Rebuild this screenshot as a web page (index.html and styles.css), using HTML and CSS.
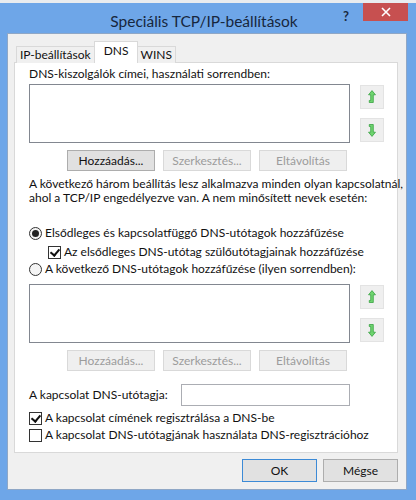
FILE: index.html
```html
<!DOCTYPE html>
<html lang="hu">
<head>
<meta charset="utf-8">
<title>Speciális TCP/IP-beállítások</title>
<link rel="stylesheet" href="styles.css">
</head>
<body>
<div class="strip"></div>
<div class="window">
  <div class="titlebar">
    <div class="title">Speciális TCP/IP-beállítások</div>
    <div class="help">?</div>
    <div class="close">
      <svg width="10" height="10" viewBox="0 0 10 10"><path d="M1 1 L9 9 M9 1 L1 9" stroke="#fff" stroke-width="1.6"/></svg>
    </div>
  </div>
  <div class="client">
    <div class="tabs">
      <div class="tab">IP-beállítások</div>
      <div class="tab active">DNS</div>
      <div class="tab">WINS</div>
    </div>
    <div class="panel">
      <div class="label first">DNS-kiszolgálók címei, használati sorrendben:</div>
      <div class="listrow">
        <div class="list"></div>
        <div class="arrows">
          <div class="arrowbtn">
            <svg width="24" height="24" viewBox="0 0 24 24"><path d="M12 5 L15.8 9.6 L13.4 9.6 L13.4 18 L9 18 L9 15.8 L10.6 15.8 L10.6 9.6 L8.2 9.6 Z" fill="#6fd46f" stroke="#2f9e3a" stroke-width="0.8" stroke-linejoin="round"/></svg>
          </div>
          <div class="arrowbtn">
            <svg width="24" height="24" viewBox="0 0 24 24"><path d="M9 6 L13.4 6 L13.4 14.4 L15.8 14.4 L12 19 L8.2 14.4 L10.6 14.4 L10.6 8.2 L9 8.2 Z" fill="#6fd46f" stroke="#2f9e3a" stroke-width="0.8" stroke-linejoin="round"/></svg>
          </div>
        </div>
      </div>
      <div class="btnrow">
        <div class="btn">Hozzáadás...</div>
        <div class="btn disabled">Szerkesztés...</div>
        <div class="btn disabled">Eltávolítás</div>
      </div>
      <p class="para">A következő három beállítás lesz alkalmazva minden olyan kapcsolatnál,<br>ahol a TCP/IP engedélyezve van. A nem minősített nevek esetén:</p>
      <div class="opt radio-row r1"><span class="radio checked"></span><span>Elsődleges és kapcsolatfüggő DNS-utótagok hozzáfűzése</span></div>
      <div class="opt check-row indent"><span class="check checked"></span><span>Az elsődleges DNS-utótag szülőutótagjainak hozzáfűzése</span></div>
      <div class="opt radio-row r2"><span class="radio"></span><span>A következő DNS-utótagok hozzáfűzése (ilyen sorrendben):</span></div>
      <div class="listrow second">
        <div class="list"></div>
        <div class="arrows">
          <div class="arrowbtn">
            <svg width="24" height="24" viewBox="0 0 24 24"><path d="M12 5 L15.8 9.6 L13.4 9.6 L13.4 18 L9 18 L9 15.8 L10.6 15.8 L10.6 9.6 L8.2 9.6 Z" fill="#6fd46f" stroke="#2f9e3a" stroke-width="0.8" stroke-linejoin="round"/></svg>
          </div>
          <div class="arrowbtn">
            <svg width="24" height="24" viewBox="0 0 24 24"><path d="M9 6 L13.4 6 L13.4 14.4 L15.8 14.4 L12 19 L8.2 14.4 L10.6 14.4 L10.6 8.2 L9 8.2 Z" fill="#6fd46f" stroke="#2f9e3a" stroke-width="0.8" stroke-linejoin="round"/></svg>
          </div>
        </div>
      </div>
      <div class="btnrow">
        <div class="btn disabled">Hozzáadás...</div>
        <div class="btn disabled">Szerkesztés...</div>
        <div class="btn disabled">Eltávolítás</div>
      </div>
      <div class="suffixrow">
        <span class="suffixlabel">A kapcsolat DNS-utótagja:</span>
        <div class="input"></div>
      </div>
      <div class="opt check-row c1"><span class="check checked"></span><span>A kapcsolat címének regisztrálása a DNS-be</span></div>
      <div class="opt check-row c2"><span class="check"></span><span>A kapcsolat DNS-utótagjának használata DNS-regisztrációhoz</span></div>
    </div>
    <div class="footer">
      <div class="btn wide default">OK</div>
      <div class="btn wide">Mégse</div>
    </div>
  </div>
</div>
</body>
</html>
```

FILE: styles.css
```css
html, body {
  margin: 0;
  padding: 0;
}
body {
  width: 416px;
  height: 500px;
  overflow: hidden;
  background: #e9ecef;
  font-family: Lato, "Noto Sans", sans-serif;
  font-size: 12px;
  color: #111;
}
.strip {
  height: 3px;
  background: #e9ecef;
}
.window {
  height: 497px;
  background: #6ea6e8;
  display: flex;
  flex-direction: column;
  box-sizing: border-box;
  padding: 0 9px 10px 7px;
}
.titlebar {
  height: 30px;
  display: flex;
  align-items: flex-start;
  position: relative;
  margin-right: -1px;
}
.title {
  flex: 1;
  text-align: center;
  font-size: 15.5px;
  color: #17273d;
  line-height: 18px;
  padding-top: 9px;
  padding-left: 62px;
}
.help {
  width: 14px;
  font-weight: bold;
  font-size: 13px;
  color: #1a2a40;
  padding-top: 5px;
  margin-right: 10px;
  text-align: center;
}
.close {
  width: 45px;
  height: 18px;
  background: #c75050;
  display: flex;
  align-items: center;
  justify-content: center;
}
.client {
  flex: 1;
  background: #f0f0f0;
  border: 1px solid #8fa7c6;
  padding: 8px 8px 0 6px;
  display: flex;
  flex-direction: column;
}
.tabs {
  display: flex;
  align-items: flex-end;
  padding-left: 2px;
  height: 21px;
  position: relative;
  z-index: 1;
  margin-bottom: -1px;
}
.tab {
  flex: none;
  height: 17px;
  box-sizing: border-box;
  border: 1px solid #d9d9d9;
  border-bottom: none;
  background: #f0f0f0;
  line-height: 16px;
  padding: 0 3px;
  white-space: nowrap;
  margin-left: -1px;
}
.tab:first-child {
  margin-left: 0;
}
.tab.active {
  height: 22px;
  background: #fff;
  line-height: 18px;
  padding: 0 8px 0 9px;
  position: relative;
  z-index: 2;
}
.panel {
  height: 391px;
  box-sizing: border-box;
  background: #fff;
  border: 1px solid #d9d9d9;
  padding: 4px 0 0 14px;
  display: flex;
  flex-direction: column;
}
.label, .para, .opt, .suffixlabel {
  line-height: 14px;
  white-space: nowrap;
}
.listrow {
  display: flex;
  margin-top: 3px;
}
.listrow.second {
  margin-top: 7px;
}
.list {
  width: 321px;
  height: 59px;
  box-sizing: border-box;
  border: 1px solid #828790;
  background: #fff;
}
.arrows {
  margin-left: 10px;
  padding-top: 1px;
  display: flex;
  flex-direction: column;
  gap: 9px;
}
.arrowbtn {
  width: 24px;
  height: 24px;
  box-sizing: border-box;
  border: 1px solid #e3e3e3;
  background: #efefef;
  display: flex;
  align-items: center;
  justify-content: center;
}
.arrowbtn svg {
  display: block;
}
.btnrow {
  display: flex;
  justify-content: flex-end;
  gap: 8px;
  width: 318px;
  margin-top: 7px;
}
.btn {
  width: 88px;
  height: 21px;
  box-sizing: border-box;
  border: 1px solid #adadad;
  background: #e1e1e1;
  display: flex;
  align-items: center;
  justify-content: center;
  line-height: 14px;
}
.btn.disabled {
  border-color: #d9d9d9;
  background: #efefef;
  color: #9c9c9c;
}
.para {
  margin: 6px 0 0 0;
}
.opt {
  display: flex;
  align-items: center;
  height: 16px;
}
.opt > span + span {
  margin-left: 3px;
}
.r1 { margin-top: 20px; }
.indent { margin-top: 3px; padding-left: 19px; }
.r2 { margin-top: 1px; }
.radio {
  width: 13px;
  height: 13px;
  box-sizing: border-box;
  border: 1px solid #333;
  border-radius: 50%;
  background: #f4f4f4;
  display: flex;
  align-items: center;
  justify-content: center;
  flex: none;
}
.radio.checked::after {
  content: "";
  width: 7px;
  height: 7px;
  border-radius: 50%;
  background: #222;
}
.check {
  width: 13px;
  height: 13px;
  box-sizing: border-box;
  border: 1px solid #333;
  background: #fff;
  position: relative;
  flex: none;
}
.check.checked::after {
  content: "";
  position: absolute;
  left: 3px;
  top: 0px;
  width: 4px;
  height: 7px;
  border-right: 2px solid #111;
  border-bottom: 2px solid #111;
  transform: rotate(40deg);
}
.suffixrow {
  display: flex;
  align-items: center;
  margin-top: 13px;
}
.suffixlabel {
  width: 152px;
}
.input {
  width: 169px;
  height: 22px;
  box-sizing: border-box;
  border: 1px solid #abadb3;
  background: #fff;
}
.c1 { margin-top: 4px; }
.c2 { margin-top: 1px; }
.footer {
  display: flex;
  justify-content: flex-end;
  gap: 6px;
  margin-top: 6px;
  padding-right: 0;
}
.btn.wide {
  width: 75px;
  height: 23px;
}
.btn.default {
  border-color: #3c8ad6;
}
```
